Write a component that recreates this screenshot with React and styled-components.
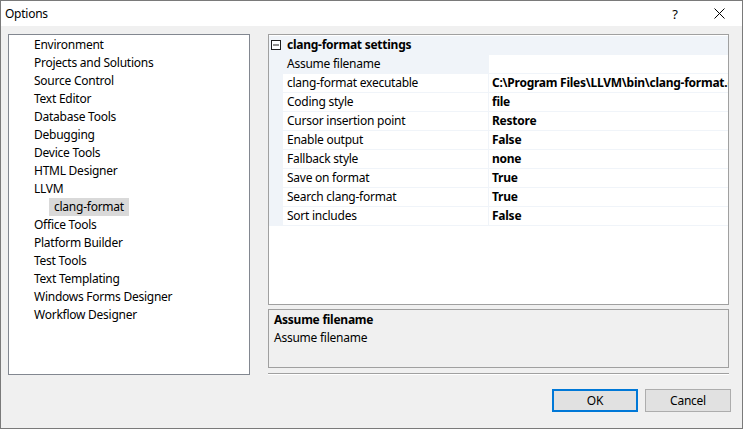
import React from "react";
import styled, { createGlobalStyle } from "styled-components";

const Global = createGlobalStyle`
  html, body { margin: 0; padding: 0; background: #f0f0f0; }
  body { font-family: "Noto Sans", "Segoe UI", sans-serif; font-size: 12px; letter-spacing: -0.25px; color: #000; }
  * { box-sizing: border-box; }
`;

const Window = styled.div`
  width: 743px;
  height: 429px;
  border: 1px solid #7a7a7a;
  background: #f0f0f0;
  display: flex;
  flex-direction: column;
  overflow: hidden;
`;

const TitleBar = styled.div`
  height: 25px;
  background: #fff;
  display: flex;
  align-items: center;
  padding-left: 4px;
  flex-shrink: 0;
`;

const Title = styled.div`
  flex: 1;
  font-size: 12px;
`;

const TitleButton = styled.div`
  width: 46px;
  height: 25px;
  display: flex;
  align-items: center;
  justify-content: center;
  font-size: 13px;
  padding-left: ${(p) => (p.$shift ? 4 : 0)}px;
`;

const Body = styled.div`
  flex: 1;
  display: flex;
  flex-direction: column;
  padding: 8px 11px 0 7px;
`;

const Main = styled.div`
  display: flex;
  gap: 18px;
  height: 341px;
`;

const Tree = styled.div`
  width: 242px;
  height: 341px;
  background: #fff;
  border: 1px solid #828790;
  padding-top: 1px;
  display: flex;
  flex-direction: column;
  align-items: flex-start;
`;

const TreeItem = styled.div`
  height: 18px;
  line-height: 18px;
  margin-left: ${(p) => (p.$level ? 40 : 20)}px;
  padding: 0 5px;
  background: ${(p) => (p.$selected ? "#d9d9d9" : "transparent")};
  white-space: nowrap;
`;

const RightCol = styled.div`
  width: 461px;
  display: flex;
  flex-direction: column;
`;

const Grid = styled.div`
  height: 272px;
  background: #fff;
  border: 1px solid #a0a0a0;
  padding-top: 1px;
  overflow: hidden;
`;

const GridRow = styled.div`
  display: flex;
  height: 19px;
  border-bottom: 1px solid #f0f4f9;
  background: ${(p) => (p.$header ? "#f0f4f9" : "#fff")};
`;

const Margin = styled.div`
  width: 14px;
  flex-shrink: 0;
  background: #f0f4f9;
  display: flex;
  align-items: center;
  justify-content: center;
`;

const HeaderLabel = styled.div`
  font-weight: bold;
  line-height: 18px;
  padding-left: 4px;
  white-space: nowrap;
`;

const NameCell = styled.div`
  width: 206px;
  flex-shrink: 0;
  line-height: 18px;
  padding-left: 4px;
  border-right: 1px solid #f0f4f9;
  background: ${(p) => (p.$selected ? "#f0f4f9" : "#fff")};
  white-space: nowrap;
`;

const ValueCell = styled.div`
  flex: 1;
  min-width: 0;
  line-height: 18px;
  padding-left: 3px;
  font-weight: bold;
  white-space: nowrap;
  overflow: hidden;
`;

const Desc = styled.div`
  margin-top: 4px;
  height: 59px;
  border: 1px solid #a0a0a0;
  background: #f0f0f0;
  padding: 1px 5px;
`;

const DescTitle = styled.div`
  font-weight: bold;
  line-height: 18px;
`;

const DescText = styled.div`
  line-height: 18px;
`;

const Separator = styled.div`
  margin-top: 5px;
  height: 2px;
  border-top: 1px solid #a0a0a0;
  border-bottom: 1px solid #fff;
`;

const ButtonRow = styled.div`
  display: flex;
  justify-content: flex-end;
  gap: 7px;
  margin-top: 14px;
`;

const Button = styled.div`
  width: 86px;
  height: 23px;
  background: #e1e1e1;
  border: ${(p) => (p.$default ? "2px solid #0078d7" : "1px solid #adadad")};
  display: flex;
  align-items: center;
  justify-content: center;
`;

const tree = [
  "Environment",
  "Projects and Solutions",
  "Source Control",
  "Text Editor",
  "Database Tools",
  "Debugging",
  "Device Tools",
  "HTML Designer",
  "LLVM",
  { label: "clang-format", level: 1, selected: true },
  "Office Tools",
  "Platform Builder",
  "Test Tools",
  "Text Templating",
  "Windows Forms Designer",
  "Workflow Designer",
];

const props = [
  ["Assume filename", ""],
  ["clang-format executable", "C:\\Program Files\\LLVM\\bin\\clang-format.exe"],
  ["Coding style", "file"],
  ["Cursor insertion point", "Restore"],
  ["Enable output", "False"],
  ["Fallback style", "none"],
  ["Save on format", "True"],
  ["Search clang-format", "True"],
  ["Sort includes", "False"],
];

const MinusBox = () => (
  <svg width="11" height="11" viewBox="0 0 11 11">
    <rect x="0.5" y="0.5" width="9" height="9" fill="#fff" stroke="#1e1e1e" />
    <line x1="2" y1="5" x2="8" y2="5" stroke="#1e1e1e" />
  </svg>
);

const CloseIcon = () => (
  <svg width="11" height="11" viewBox="0 0 11 11">
    <path d="M0.5 0.5 L10.5 10.5 M10.5 0.5 L0.5 10.5" stroke="#000" strokeWidth="1" />
  </svg>
);

export default function App() {
  return (
    <>
      <Global />
      <Window>
        <TitleBar>
          <Title>Options</Title>
          <TitleButton $shift>?</TitleButton>
          <TitleButton>
            <CloseIcon />
          </TitleButton>
        </TitleBar>
        <Body>
          <Main>
            <Tree>
              {tree.map((t) =>
                typeof t === "string" ? (
                  <TreeItem key={t}>{t}</TreeItem>
                ) : (
                  <TreeItem key={t.label} $level={t.level} $selected={t.selected}>
                    {t.label}
                  </TreeItem>
                )
              )}
            </Tree>
            <RightCol>
              <Grid>
                <GridRow $header>
                  <Margin>
                    <MinusBox />
                  </Margin>
                  <HeaderLabel>clang-format settings</HeaderLabel>
                </GridRow>
                {props.map(([n, v], i) => (
                  <GridRow key={n}>
                    <Margin />
                    <NameCell $selected={i === 0}>{n}</NameCell>
                    <ValueCell>{v}</ValueCell>
                  </GridRow>
                ))}
              </Grid>
              <Desc>
                <DescTitle>Assume filename</DescTitle>
                <DescText>Assume filename</DescText>
              </Desc>
              <Separator />
            </RightCol>
          </Main>
          <ButtonRow>
            <Button $default>OK</Button>
            <Button>Cancel</Button>
          </ButtonRow>
        </Body>
      </Window>
    </>
  );
}
